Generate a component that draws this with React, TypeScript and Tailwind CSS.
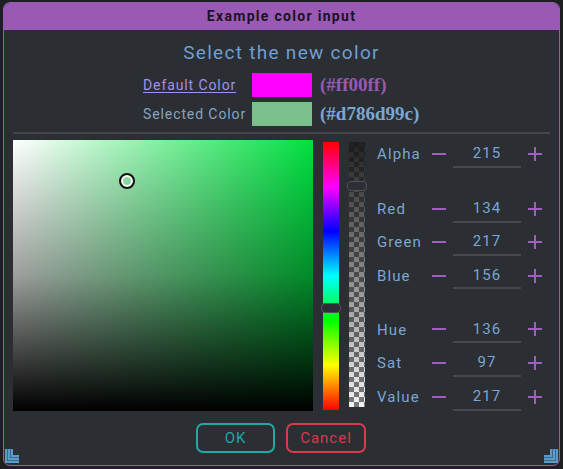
import React from "react";

const fieldRows = [
  { label: "Alpha", value: 215, gap: "mt-0" },
  { label: "Red", value: 134, gap: "mt-[27px]" },
  { label: "Green", value: 217, gap: "mt-[5px]" },
  { label: "Blue", value: 156, gap: "mt-[6px]" },
  { label: "Hue", value: 136, gap: "mt-[26px]" },
  { label: "Sat", value: 97, gap: "mt-[6px]" },
  { label: "Value", value: 217, gap: "mt-[6px]" },
];

function CornerGrip({ flip }: { flip?: boolean }) {
  return (
    <svg width="14" height="14" viewBox="0 0 14 14" className={flip ? "-scale-x-100" : ""}>
      <path d="M1 0V13H14M4 0V10H14M7 0V7H14" fill="none" stroke="#5d9cc9" strokeWidth="2" />
      <path d="M2.5 0V11.5H14M5.5 0V8.5H14" fill="none" stroke="#3b6a8f" strokeWidth="1" />
    </svg>
  );
}

function FieldRow({ label, value, gap }: { label: string; value: number; gap: string }) {
  return (
    <div className={`flex items-center h-[28px] ${gap}`}>
      <span className="w-[55px] pt-[1px] text-[15px] tracking-[1.1px] text-[#79a6d2]">{label}</span>
      <div className="w-[14px] h-[2px] bg-[#a25ec2]" />
      <div className="ml-[7px] w-[68px] h-full pt-[1px] flex items-center justify-center border-b-2 border-[#45484e] text-[15px] tracking-[1px] text-[#79a6d2]">
        {value}
      </div>
      <svg className="ml-[7px]" width="14" height="14" viewBox="0 0 14 14">
        <path d="M0 7H14M7 0V14" stroke="#a25ec2" strokeWidth="2" />
      </svg>
    </div>
  );
}

export default function App() {
  return (
    <div className="w-[563px] h-[469px] bg-[#1e1f22] pt-[2px] pl-[3px] font-['Roboto',sans-serif]">
      <div className="relative w-[557px] h-[464px] rounded-[7px] border border-[#9b59b6] bg-[#2b2e33] flex flex-col overflow-hidden">
        {/* Title bar */}
        <div className="h-[27px] bg-[#9b59b6] flex items-center justify-center">
          <span className="text-[14px] font-bold tracking-[1.3px] text-[#1a1420]">Example color input</span>
        </div>

        <div className="mt-[12px] h-[22px] leading-[22px] text-center text-[19px] tracking-[1.3px] text-[#6f9fcf]">
          Select the new color
        </div>

        {/* Colour preview rows */}
        <div className="mt-[9px] flex items-center h-[24px] pl-[139px]">
          <span className="w-[109px] text-[14px] tracking-[0.9px] text-[#a290f2] underline underline-offset-2">Default Color</span>
          <div className="w-[60px] h-[24px] bg-[#ff00ff]" />
          <span className="ml-[8px] font-['Liberation_Serif',serif] font-bold text-[19px] text-[#9659b4]">(#ff00ff)</span>
        </div>
        <div className="mt-[5px] flex items-center h-[24px] pl-[139px]">
          <span className="w-[109px] text-[14px] tracking-[0.9px] text-[#8aa3be]">Selected Color</span>
          <div className="w-[60px] h-[24px] bg-[#7bbf8c]" />
          <span className="ml-[8px] font-['Liberation_Serif',serif] font-bold text-[19px] text-[#7aa6d3]">(#d786d99c)</span>
        </div>

        <div className="mt-[6px] mx-[9px] h-[2px] bg-[#44474d]" />

        {/* Picker area */}
        <div className="mt-[6px] flex pl-[9px] h-[271px]">
          <div className="relative w-[300px] h-[271px] [background-image:linear-gradient(to_top,#000_0%,rgba(0,0,0,0.38)_50%,transparent_100%),linear-gradient(to_right,#fff,#00e040)]">
            <div className="absolute left-[106px] top-[33px] w-[16px] h-[16px] rounded-full border-2 border-[#111] shadow-[inset_0_0_0_2px_#fff]" />
          </div>

          <div className="relative ml-[10px] mt-[2px] w-[16px] h-[268px] [background-image:linear-gradient(to_bottom,#f00,#f0f,#00f,#0ff,#0f0,#ff0,#f00)]">
            <div className="absolute -left-[2px] top-[161px] w-[20px] h-[10px] rounded-[4px] border border-[#4e5158] bg-[#2c2f35]" />
          </div>

          <div className="relative ml-[10px] mt-[2px] w-[16px] h-[265px] [background-image:linear-gradient(to_bottom,rgba(22,22,22,0.95),rgba(22,22,22,0)),repeating-conic-gradient(#7a7a7a_0%_25%,#f4f4f4_0%_50%)] [background-size:100%_100%,10px_10px]">
            <div className="absolute -left-[2px] top-[39px] w-[20px] h-[10px] rounded-[4px] border border-[#4e5158] bg-[#2c2f35]" />
          </div>

          <div className="ml-[12px] flex flex-col">
            {fieldRows.map((r) => (
              <FieldRow key={r.label} {...r} />
            ))}
          </div>
        </div>

        {/* Buttons */}
        <div className="mt-[12px] flex justify-center gap-[11px] pr-[1px]">
          <button className="w-[79px] h-[30px] rounded-[7px] border-2 border-[#20a9a5] text-[15px] tracking-[1px] text-[#20a9a5]">
            OK
          </button>
          <button className="w-[80px] h-[30px] rounded-[7px] border-2 border-[#d93a4c] text-[15px] tracking-[1px] text-[#d93a4c]">
            Cancel
          </button>
        </div>

        <div className="absolute left-[1px] bottom-[2px]">
          <CornerGrip />
        </div>
        <div className="absolute right-[1px] bottom-[2px]">
          <CornerGrip flip />
        </div>
      </div>
    </div>
  );
}
